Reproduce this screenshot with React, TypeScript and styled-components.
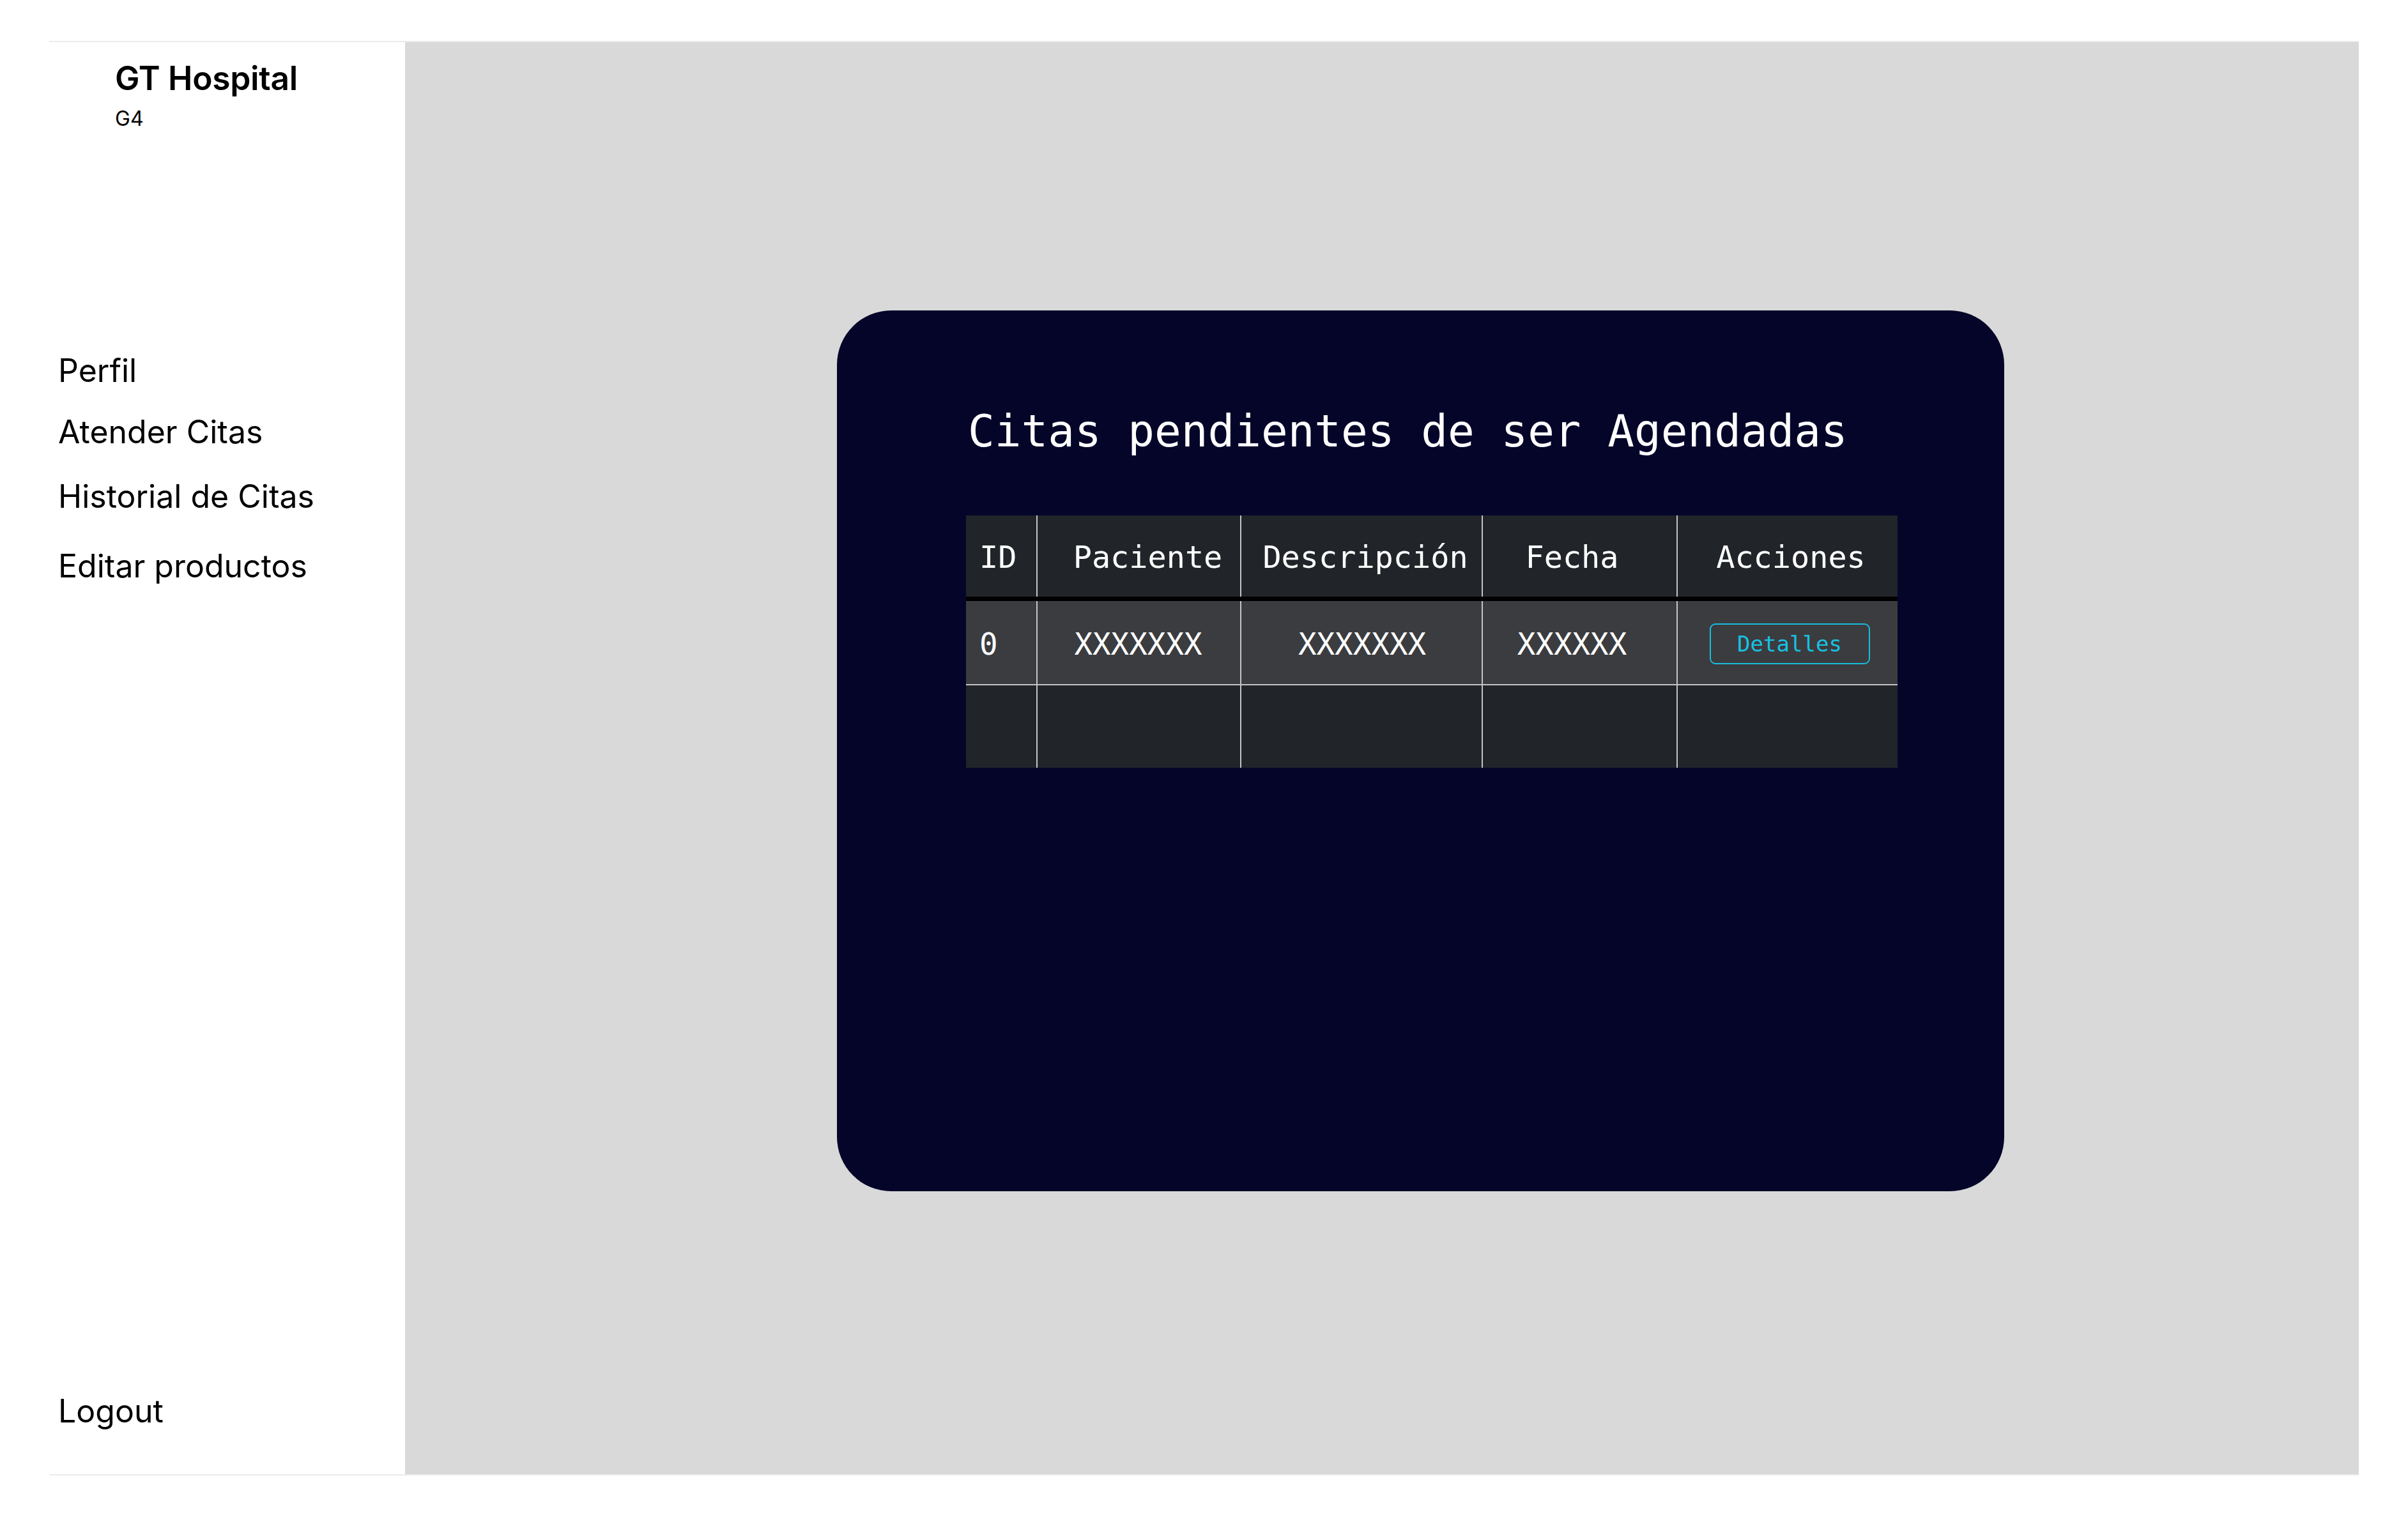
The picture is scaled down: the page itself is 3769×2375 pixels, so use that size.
import React from "react";
import styled, { createGlobalStyle } from "styled-components";

const GlobalStyle = createGlobalStyle`
  html, body {
    margin: 0;
    padding: 0;
    background: #ffffff;
  }
  * { box-sizing: border-box; }
`;

const Page = styled.div`
  padding: 64px 77px 65px 77px;
  background: #ffffff;
`;

const Frame = styled.div`
  display: flex;
  height: 2246px;
  border-top: 2px solid #ebebeb;
  border-bottom: 2px solid #ebebeb;
`;

const Sidebar = styled.aside`
  width: 557px;
  flex: none;
  display: flex;
  flex-direction: column;
  background: #ffffff;
  font-family: Inter, "Liberation Sans", sans-serif;
  color: #000000;
`;

const Brand = styled.div`
  display: flex;
  flex-direction: column;
  padding: 31px 0 0 103px;
`;

const BrandTitle = styled.div`
  font-size: 51.5px;
  line-height: 1;
  font-weight: 600;
  letter-spacing: -0.3px;
`;

const BrandSub = styled.div`
  margin-top: 21px;
  font-size: 32px;
  line-height: 1;
  font-weight: 400;
`;

const Nav = styled.nav`
  display: flex;
  flex-direction: column;
  padding-left: 14px;
  margin-top: 353px;
`;

const NavItem = styled.a<{ $gap: number }>`
  display: block;
  margin-top: ${(p) => p.$gap}px;
  font-size: 50px;
  line-height: 1;
  color: #000000;
  text-decoration: none;
`;

const Spacer = styled.div`
  flex: 1;
`;

const Logout = styled.a`
  display: block;
  padding: 0 0 74px 14px;
  font-size: 50px;
  line-height: 1;
  color: #000000;
  text-decoration: none;
`;

const Main = styled.main`
  flex: 1;
  background: #d9d9d9;
  padding: 420px 0 0 676px;
`;

const Card = styled.section`
  width: 1827px;
  height: 1379px;
  background: #05052a;
  border-radius: 85px;
  padding: 155px 167px 0 202px;
  display: flex;
  flex-direction: column;
  font-family: "DejaVu Sans Mono", "Liberation Mono", monospace;
  color: #ffffff;
`;

const Title = styled.h1`
  margin: 0;
  font-size: 69.3px;
  line-height: 1;
  font-weight: 400;
  padding-left: 3px;
`;

const Table = styled.div`
  margin-top: 97px;
  width: 1458px;
  display: flex;
  flex-direction: column;
`;

const COLS = "110px 319px 378px 305px 346px";

const Row = styled.div<{ $variant: "head" | "striped" | "plain" }>`
  display: grid;
  grid-template-columns: ${COLS};
  background: ${(p) => (p.$variant === "striped" ? "#3b3c3f" : "#212529")};
  height: ${(p) => (p.$variant === "head" ? 134 : p.$variant === "striped" ? 132 : 129)}px;
  border-bottom: ${(p) =>
    p.$variant === "head"
      ? "7px solid #000000"
      : p.$variant === "striped"
      ? "2px solid #c4c4c4"
      : "none"};
`;

const Cell = styled.div<{ $first?: boolean; $head?: boolean; $shift?: number }>`
  display: flex;
  align-items: center;
  justify-content: ${(p) => (p.$first ? "flex-start" : "center")};
  padding-left: ${(p) => (p.$first ? 21 : Math.max(0, p.$shift ?? 0))}px;
  padding-right: ${(p) => Math.max(0, -(p.$shift ?? 0))}px;
  padding-top: ${(p) => (p.$head ? 2 : 4)}px;
  border-left: ${(p) => (p.$first ? "none" : "2px solid #c4c4c4")};
  font-size: ${(p) => (p.$head ? 48.5 : 47.5)}px;
  line-height: 1;
  color: #ffffff;
  white-space: nowrap;
`;

const DetailButton = styled.button`
  width: 251px;
  height: 64px;
  background: transparent;
  border: 2px solid #17bedd;
  border-radius: 9px;
  color: #17c2e2;
  font-family: "DejaVu Sans Mono", "Liberation Mono", monospace;
  font-size: 34px;
  line-height: 1;
  padding: 0;
  cursor: pointer;
  margin-left: 6px;
`;

const headers: { label: string; shift: number }[] = [
  { label: "ID", shift: 0 },
  { label: "Paciente", shift: 28 },
  { label: "Descripción", shift: 12 },
  { label: "Fecha", shift: -24 },
  { label: "Acciones", shift: 10 },
];

const bodyShift = [0, -2, 2, -24, 0];

const navItems: { label: string; gap: number }[] = [
  { label: "Perfil", gap: 0 },
  { label: "Atender Citas", gap: 46 },
  { label: "Historial de Citas", gap: 51 },
  { label: "Editar productos", gap: 59 },
];

export default function App() {
  return (
    <>
      <GlobalStyle />
      <Page>
        <Frame>
          <Sidebar>
            <Brand>
              <BrandTitle>GT Hospital</BrandTitle>
              <BrandSub>G4</BrandSub>
            </Brand>
            <Nav>
              {navItems.map((n) => (
                <NavItem key={n.label} $gap={n.gap}>
                  {n.label}
                </NavItem>
              ))}
            </Nav>
            <Spacer />
            <Logout>Logout</Logout>
          </Sidebar>
          <Main>
            <Card>
              <Title>Citas pendientes de ser Agendadas</Title>
              <Table>
                <Row $variant="head">
                  {headers.map((h, i) => (
                    <Cell key={h.label} $first={i === 0} $head $shift={h.shift}>
                      {h.label}
                    </Cell>
                  ))}
                </Row>
                <Row $variant="striped">
                  <Cell $first>0</Cell>
                  <Cell $shift={bodyShift[1]}>XXXXXXX</Cell>
                  <Cell $shift={bodyShift[2]}>XXXXXXX</Cell>
                  <Cell $shift={bodyShift[3]}>XXXXXX</Cell>
                  <Cell $shift={bodyShift[4]}>
                    <DetailButton>Detalles</DetailButton>
                  </Cell>
                </Row>
                <Row $variant="plain">
                  <Cell $first />
                  <Cell />
                  <Cell />
                  <Cell />
                  <Cell />
                </Row>
              </Table>
            </Card>
          </Main>
        </Frame>
      </Page>
    </>
  );
}
